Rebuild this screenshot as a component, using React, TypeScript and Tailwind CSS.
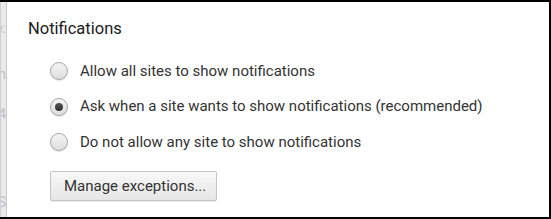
import React from "react";

function Radio({ checked }: { checked?: boolean }) {
  return (
    <span className="flex h-[18px] w-[18px] shrink-0 items-center justify-center rounded-full border border-[#a6a6a6] bg-gradient-to-b from-[#f4f4f4] to-[#dedede] shadow-[0_1px_1px_rgba(0,0,0,0.12)]">
      {checked ? <span className="h-[8px] w-[8px] rounded-full bg-gradient-to-b from-[#555555] to-[#2e2e2e]" /> : null}
    </span>
  );
}

function Row({ label, checked }: { label: string; checked?: boolean }) {
  return (
    <div className="flex h-[35.5px] items-center gap-[12px] pl-[22px]">
      <Radio checked={checked} />
      <span className="text-[15px] leading-[35.5px] text-[#333333]">{label}</span>
    </div>
  );
}

export default function App() {
  return (
    <div
      className="flex h-[219px] w-[551px] overflow-hidden border-y-2 border-black bg-white"
      style={{ fontFamily: "Roboto, 'Liberation Sans', sans-serif" }}
    >
      <div className="flex w-[7px] shrink-0 flex-col items-end overflow-hidden border-l border-[#cfcfcf] border-r border-r-[#c8c8c8] bg-[#ebebeb] text-[14px] leading-[16px] text-[#b9c0cb]">
        <span className="mt-[18px] whitespace-nowrap">e:</span>
        <span className="mt-[30px] whitespace-nowrap">n</span>
        <span className="mt-[24px] whitespace-nowrap">4</span>
        <span className="mt-[72px] whitespace-nowrap">S</span>
      </div>
      <div className="flex flex-1 flex-col border-r-2 border-black pl-[21px] pt-[17px]">
        <div className="text-[16.5px] leading-[20px] text-[#1a1a1a]">Notifications</div>
        <div className="mt-[14.5px] flex flex-col">
          <Row label="Allow all sites to show notifications" />
          <Row label="Ask when a site wants to show notifications (recommended)" checked />
          <Row label="Do not allow any site to show notifications" />
        </div>
        <div className="mt-[11px] pl-[22px]">
          <button className="h-[30px] rounded-[2px] border border-[#c4c4c4] bg-gradient-to-b from-[#f8f8f8] to-[#e6e6e6] pl-[13px] pr-[10px] text-[15px] leading-[28px] text-[#333333] shadow-[0_1px_0_rgba(0,0,0,0.08)]">
            Manage exceptions...
          </button>
        </div>
      </div>
    </div>
  );
}
